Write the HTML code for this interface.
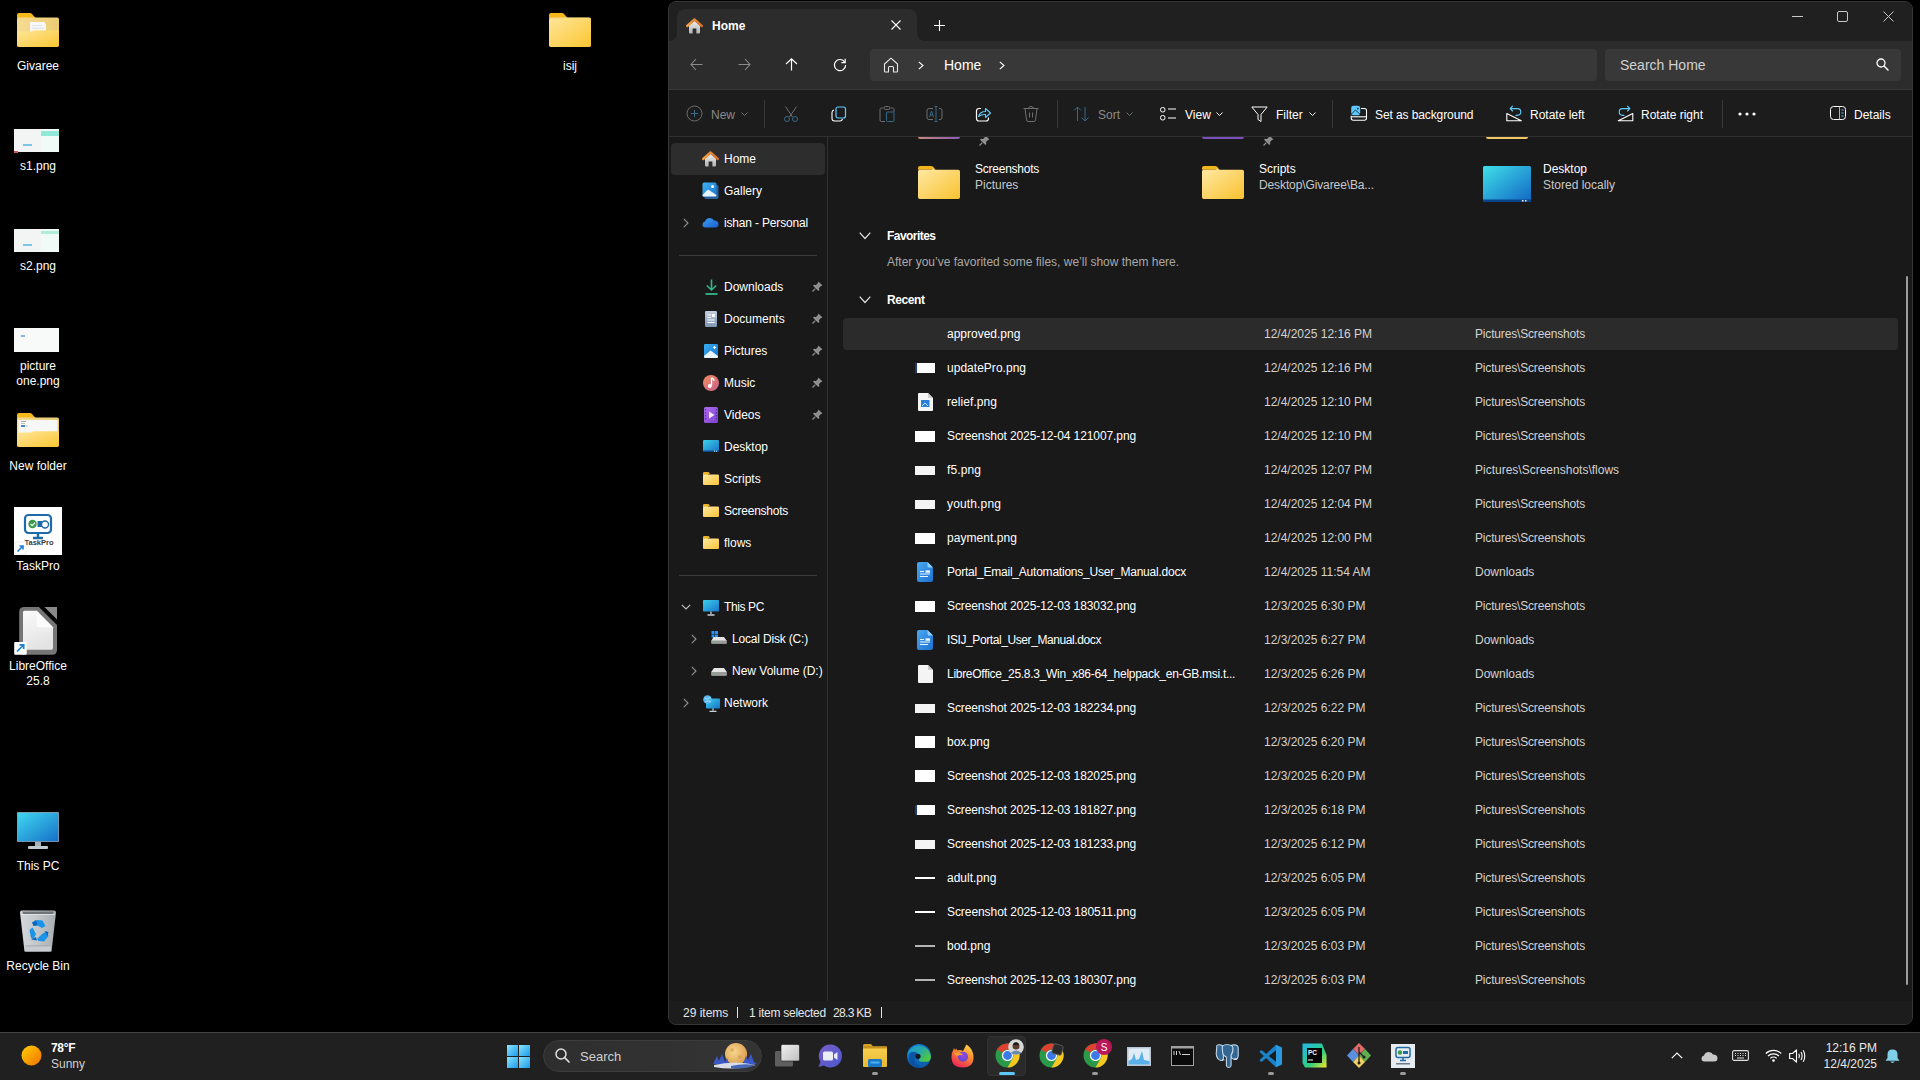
<!DOCTYPE html><html><head><meta charset="utf-8"><style>
html,body{margin:0;padding:0;width:1920px;height:1080px;overflow:hidden;background:#000;font-family:"Liberation Sans", sans-serif;}
.t{position:absolute;white-space:nowrap;}
svg{overflow:visible}
</style></head><body>
<div style="position:absolute;left:668px;top:1px;width:1245px;height:1024px;box-sizing:border-box;border:1px solid #363636;border-radius:8px;background:#191919;overflow:hidden">
<div style="position:absolute;left:0px;top:0px;width:1243px;height:39px;background:#202020;"></div>
<div style="position:absolute;left:0px;top:28px;width:1243px;height:59px;background:#2c2c2c;"></div>
<div style="position:absolute;left:0px;top:0px;width:8px;height:39px;background:#202020;border-bottom-right-radius:8px"></div>
<div style="position:absolute;left:248px;top:0px;width:995px;height:39px;background:#202020;border-bottom-left-radius:8px"></div>
<div style="position:absolute;left:8px;top:7px;width:240px;height:33px;background:#2c2c2c;border-top-left-radius:8px;border-top-right-radius:8px"></div>
<div style="position:absolute;left:0px;top:87px;width:1243px;height:1px;background:#383838;"></div>
<div style="position:absolute;left:0px;top:88px;width:1243px;height:46px;background:#1c1c1c;"></div>
<div style="position:absolute;left:0px;top:134px;width:1243px;height:1px;background:#303030;"></div>
<div style="position:absolute;left:0px;top:135px;width:158px;height:864px;background:#191919;"></div>
<div style="position:absolute;left:158px;top:135px;width:1px;height:864px;background:#303030;"></div>
<div style="position:absolute;left:159px;top:135px;width:1084px;height:864px;background:#191919;"></div>
<div style="position:absolute;left:0px;top:999px;width:1243px;height:23px;background:#1c1c1c;"></div>
</div>
<svg style="position:absolute;left:686px;top:18px;" width="17" height="16" viewBox="0 0 17 16"><defs><linearGradient id="thw" x1="0" y1="0" x2="0" y2="1"><stop offset="0" stop-color="#ececec"/><stop offset="1" stop-color="#b4b4b4"/></linearGradient>
<linearGradient id="thr" x1="0" y1="0" x2="1" y2="0"><stop offset="0" stop-color="#f3a13c"/><stop offset="1" stop-color="#d96f28"/></linearGradient></defs>
<path d="M3 7.5 L8.5 3 L14 7.5 L14 14.6 Q14 15.4 13.2 15.4 L10.4 15.4 L10.4 10.6 L6.6 10.6 L6.6 15.4 L3.8 15.4 Q3 15.4 3 14.6 Z" fill="url(#thw)"/>
<path d="M1.2 8 L8.5 1.4 L15.8 8" fill="none" stroke="url(#thr)" stroke-width="2.4" stroke-linecap="round" stroke-linejoin="round"/></svg>
<div class="t" style="left:712px;top:17.84px;font-size:12px;line-height:16px;color:#ffffff;font-weight:bold;">Home</div>
<svg style="position:absolute;left:891px;top:20px;" width="10" height="10" viewBox="0 0 10 10"><path d="M0.5 0.5 L9.5 9.5 M9.5 0.5 L0.5 9.5" stroke="#ffffff" stroke-width="1.1"/></svg>
<svg style="position:absolute;left:934px;top:20px;" width="11" height="11" viewBox="0 0 11 11"><path d="M5.5 0 V11 M0 5.5 H11" stroke="#ffffff" stroke-width="1.1"/></svg>
<svg style="position:absolute;left:1792px;top:16px;" width="12" height="2" viewBox="0 0 12 2"><path d="M0 0.5 H11" stroke="#c8c8c8" stroke-width="1"/></svg>
<svg style="position:absolute;left:1837px;top:11px;" width="12" height="12" viewBox="0 0 12 12"><rect x="0.5" y="0.5" width="10" height="10" rx="1.5" fill="none" stroke="#c8c8c8" stroke-width="1"/></svg>
<svg style="position:absolute;left:1883px;top:11px;" width="12" height="12" viewBox="0 0 12 12"><path d="M0.5 0.5 L10.5 10.5 M10.5 0.5 L0.5 10.5" stroke="#c8c8c8" stroke-width="1"/></svg>
<svg style="position:absolute;left:690px;top:58px;" width="13" height="13" viewBox="0 0 13 13"><path d="M6 1 L1 6.5 L6 12 M1 6.5 H12.5" fill="none" stroke="#8a8a8a" stroke-width="1.1"/></svg>
<svg style="position:absolute;left:738px;top:58px;" width="13" height="13" viewBox="0 0 13 13"><path d="M7 1 L12 6.5 L7 12 M12 6.5 H0.5" fill="none" stroke="#8a8a8a" stroke-width="1.1"/></svg>
<svg style="position:absolute;left:785px;top:58px;" width="13" height="13" viewBox="0 0 13 13"><path d="M1 6 L6.5 0.8 L12 6 M6.5 1 V12.5" fill="none" stroke="#ffffff" stroke-width="1.2"/></svg>
<svg style="position:absolute;left:833px;top:58px;" width="14" height="14" viewBox="0 0 14 14"><path d="M11.8 4.2 A5.6 5.6 0 1 0 12.6 7" fill="none" stroke="#ffffff" stroke-width="1.2"/><path d="M12.2 0.8 V4.6 H8.4" fill="none" stroke="#ffffff" stroke-width="1.2"/></svg>
<div style="position:absolute;left:870px;top:49px;width:727px;height:32px;background:#383838;border-radius:4px"></div>
<svg style="position:absolute;left:883px;top:57px;" width="16" height="16" viewBox="0 0 16 16"><path d="M1.5 7 L8 1.2 L14.5 7 V14.2 Q14.5 15 13.7 15 H10.5 V10.5 Q10.5 9.5 9.5 9.5 H6.5 Q5.5 9.5 5.5 10.5 V15 H2.3 Q1.5 15 1.5 14.2 Z" fill="none" stroke="#e8e8e8" stroke-width="1.1" stroke-linejoin="round"/></svg>
<svg style="position:absolute;left:918px;top:61px;" width="6" height="9" viewBox="0 0 6 9"><path d="M0.8 0.8 L5 4.5 L0.8 8.2" fill="none" stroke="#ffffff" stroke-width="1.1"/></svg>
<div class="t" style="left:944px;top:55.65px;font-size:14px;line-height:19px;color:#ffffff;font-weight:normal;">Home</div>
<svg style="position:absolute;left:999px;top:61px;" width="6" height="9" viewBox="0 0 6 9"><path d="M0.8 0.8 L5 4.5 L0.8 8.2" fill="none" stroke="#ffffff" stroke-width="1.1"/></svg>
<div style="position:absolute;left:1605px;top:49px;width:296px;height:32px;background:#383838;border-radius:4px"></div>
<div class="t" style="left:1620px;top:55.65px;font-size:14px;line-height:19px;color:#d0d0d0;font-weight:normal;">Search Home</div>
<svg style="position:absolute;left:1876px;top:58px;" width="13" height="13" viewBox="0 0 13 13"><circle cx="5" cy="5" r="4" fill="none" stroke="#ffffff" stroke-width="1.3"/><path d="M8 8 L12 12" stroke="#ffffff" stroke-width="1.5" stroke-linecap="round"/></svg>
<svg style="position:absolute;left:686px;top:105px;" width="17" height="17" viewBox="0 0 17 17"><circle cx="8.5" cy="8.5" r="7.5" fill="none" stroke="#6e6e6e" stroke-width="1"/><path d="M8.5 4.8 V12.2 M4.8 8.5 H12.2" stroke="#35698a" stroke-width="1"/></svg>
<div class="t" style="left:711px;top:106.84px;font-size:12px;line-height:16px;color:#8a8a8a;font-weight:normal;">New</div>
<svg style="position:absolute;left:741px;top:112px;" width="7" height="5" viewBox="0 0 7 5"><path d="M0.5 0.5 L3.5 3.5 L6.5 0.5" fill="none" stroke="#6e6e6e" stroke-width="1"/></svg>
<div style="position:absolute;left:764px;top:100px;width:1px;height:28px;background:#383838;"></div>
<svg style="position:absolute;left:783px;top:106px;" width="16" height="16" viewBox="0 0 16 16"><path d="M2.5 0.5 L9.5 11 M13.5 0.5 L6.5 11" stroke="#6e6e6e" stroke-width="1"/><circle cx="4" cy="13" r="2.5" fill="none" stroke="#35698a" stroke-width="1"/><circle cx="12" cy="13" r="2.5" fill="none" stroke="#35698a" stroke-width="1"/></svg>
<svg style="position:absolute;left:831px;top:106px;" width="16" height="16" viewBox="0 0 16 16"><path d="M3 4 Q1 4.5 1 6.5 V12.5 Q1 15 3.5 15 H9 Q11 15 11.5 13" fill="none" stroke="#ffffff" stroke-width="1.1"/><rect x="5" y="1" width="9.5" height="11" rx="2" fill="none" stroke="#60cdff" stroke-width="1.2"/></svg>
<svg style="position:absolute;left:879px;top:106px;" width="16" height="16" viewBox="0 0 16 16"><path d="M4 2 H2.5 Q1 2 1 3.5 V14 Q1 15.5 2.5 15.5 H6 M12 2 H13.5 Q15 2 15 3.5 V6" fill="none" stroke="#6e6e6e" stroke-width="1"/><rect x="5" y="0.5" width="6" height="3" rx="1.5" fill="none" stroke="#6e6e6e" stroke-width="1"/><rect x="7.5" y="6" width="7.5" height="9.5" rx="1" fill="none" stroke="#35698a" stroke-width="1"/></svg>
<svg style="position:absolute;left:926px;top:106px;" width="17" height="16" viewBox="0 0 17 16"><path d="M7 2.5 H3 Q1 2.5 1 4.5 V11.5 Q1 13.5 3 13.5 H7 M13 2.5 H14 Q16 2.5 16 4.5 V11.5 Q16 13.5 14 13.5 H13" fill="none" stroke="#6e6e6e" stroke-width="1"/><path d="M3.5 11 L5.5 5 L7.5 11 M4.2 9 H6.8" fill="none" stroke="#35698a" stroke-width="1"/><path d="M10 0.5 V15.5 M8.5 0.5 H11.5 M8.5 15.5 H11.5" fill="none" stroke="#35698a" stroke-width="1"/></svg>
<svg style="position:absolute;left:975px;top:106px;" width="17" height="16" viewBox="0 0 17 16"><path d="M6 2.5 H4 Q1.5 2.5 1.5 5 V12.5 Q1.5 15 4 15 H11 Q13.5 15 13.5 12.5 V11.5" fill="none" stroke="#ffffff" stroke-width="1.2"/><path d="M3.5 10.5 Q5 5.5 10.5 5.5 V2.5 L15.5 7 L10.5 11.5 V8.5 Q6.5 8.2 3.5 10.5 Z" fill="none" stroke="#60cdff" stroke-width="1.1" stroke-linejoin="round"/></svg>
<svg style="position:absolute;left:1023px;top:106px;" width="16" height="16" viewBox="0 0 16 16"><path d="M0.5 2.5 H15.5 M5.5 2.5 Q5.5 0.5 8 0.5 Q10.5 0.5 10.5 2.5 M2 2.5 L3.5 14 Q3.7 15.5 5 15.5 H11 Q12.3 15.5 12.5 14 L14 2.5 M6.5 6.5 V11.5 M9.5 6.5 V11.5" fill="none" stroke="#6e6e6e" stroke-width="1"/></svg>
<div style="position:absolute;left:1057px;top:100px;width:1px;height:28px;background:#383838;"></div>
<svg style="position:absolute;left:1073px;top:106px;" width="17" height="16" viewBox="0 0 17 16"><path d="M4.5 15 V1 M1 4.5 L4.5 1 L8 4.5" fill="none" stroke="#35698a" stroke-width="1"/><path d="M12 1 V15 M8.5 11.5 L12 15 L15.5 11.5" fill="none" stroke="#35698a" stroke-width="1"/></svg>
<div class="t" style="left:1098px;top:106.84px;font-size:12px;line-height:16px;color:#8a8a8a;font-weight:normal;">Sort</div>
<svg style="position:absolute;left:1126px;top:112px;" width="7" height="5" viewBox="0 0 7 5"><path d="M0.5 0.5 L3.5 3.5 L6.5 0.5" fill="none" stroke="#6e6e6e" stroke-width="1"/></svg>
<svg style="position:absolute;left:1160px;top:106px;" width="17" height="16" viewBox="0 0 17 16"><rect x="0.5" y="1.5" width="4.5" height="4.5" rx="2" fill="none" stroke="#ffffff" stroke-width="1"/><rect x="0.5" y="9.5" width="4.5" height="4.5" rx="2" fill="none" stroke="#ffffff" stroke-width="1"/><path d="M8 3 H16 M8 12 H16" stroke="#ffffff" stroke-width="1"/></svg>
<div class="t" style="left:1185px;top:106.84px;font-size:12px;line-height:16px;color:#ffffff;font-weight:normal;">View</div>
<svg style="position:absolute;left:1216px;top:112px;" width="7" height="5" viewBox="0 0 7 5"><path d="M0.5 0.5 L3.5 3.5 L6.5 0.5" fill="none" stroke="#ffffff" stroke-width="1"/></svg>
<svg style="position:absolute;left:1251px;top:106px;" width="17" height="16" viewBox="0 0 17 16"><path d="M0.8 1 H16.2 L10 8.5 V15.5 L7 13.5 V8.5 Z" fill="none" stroke="#ffffff" stroke-width="1" stroke-linejoin="round"/></svg>
<div class="t" style="left:1276px;top:106.84px;font-size:12px;line-height:16px;color:#ffffff;font-weight:normal;">Filter</div>
<svg style="position:absolute;left:1309px;top:112px;" width="7" height="5" viewBox="0 0 7 5"><path d="M0.5 0.5 L3.5 3.5 L6.5 0.5" fill="none" stroke="#ffffff" stroke-width="1"/></svg>
<div style="position:absolute;left:1332px;top:100px;width:1px;height:28px;background:#383838;"></div>
<svg style="position:absolute;left:1350px;top:105px;" width="18" height="17" viewBox="0 0 18 17"><rect x="1.2" y="0.8" width="9" height="9.5" rx="2.2" fill="#5cc8ff"/><path d="M1.5 9 L5.5 5 L9.8 9" fill="none" stroke="#0d2a40" stroke-width="0.9"/><circle cx="7.8" cy="3.6" r="0.9" fill="#0d2a40"/><path d="M11 3.5 H14.5 Q16.5 3.5 16.5 5.5 V13 Q16.5 15.2 14.3 15.2 H3.3 Q1.2 15.2 1.2 13 V10.8" fill="none" stroke="#ffffff" stroke-width="1.1"/><path d="M1.5 11.8 H16.2" stroke="#ffffff" stroke-width="1.1"/></svg>
<div class="t" style="left:1375px;top:106.84px;font-size:12px;line-height:16px;color:#ffffff;font-weight:normal;letter-spacing:-0.1px">Set as background</div>
<svg style="position:absolute;left:1506px;top:105px;" width="17" height="17" viewBox="0 0 17 17"><path d="M0.8 8.5 V15.8 H15.3 Z" fill="none" stroke="#ffffff" stroke-width="1.1" stroke-linejoin="round"/><path d="M6.5 1.2 L4.2 3.6 L6.5 6 M4.4 3.6 H11.5 Q14.8 3.6 14.8 7 Q14.8 10.2 11.2 10.4 H10" fill="none" stroke="#60cdff" stroke-width="1.1" stroke-linecap="round"/></svg>
<div class="t" style="left:1530px;top:106.84px;font-size:12px;line-height:16px;color:#ffffff;font-weight:normal;">Rotate left</div>
<svg style="position:absolute;left:1617px;top:105px;" width="17" height="17" viewBox="0 0 17 17"><path d="M15.8 8.5 V15.8 H1.3 Z" fill="none" stroke="#ffffff" stroke-width="1.1" stroke-linejoin="round"/><path d="M10.5 1.2 L12.8 3.6 L10.5 6 M12.6 3.6 H5.5 Q2.2 3.6 2.2 7 Q2.2 10.2 5.8 10.4 H7" fill="none" stroke="#60cdff" stroke-width="1.1" stroke-linecap="round"/></svg>
<div class="t" style="left:1641px;top:106.84px;font-size:12px;line-height:16px;color:#ffffff;font-weight:normal;">Rotate right</div>
<div style="position:absolute;left:1722px;top:100px;width:1px;height:28px;background:#383838;"></div>
<svg style="position:absolute;left:1738px;top:112px;" width="18" height="4" viewBox="0 0 18 4"><circle cx="2" cy="2" r="1.6" fill="#ffffff"/><circle cx="9" cy="2" r="1.6" fill="#ffffff"/><circle cx="16" cy="2" r="1.6" fill="#ffffff"/></svg>
<svg style="position:absolute;left:1830px;top:106px;" width="16" height="15" viewBox="0 0 16 15"><rect x="0.5" y="0.5" width="15" height="13" rx="3" fill="none" stroke="#ffffff" stroke-width="1"/><path d="M9.5 0.5 V13.5" stroke="#60cdff" stroke-width="1"/><path d="M11.5 4 H13.5 M11.5 7 H13.5 M11.5 10 H13.5" stroke="#60cdff" stroke-width="1"/></svg>
<div class="t" style="left:1854px;top:106.84px;font-size:12px;line-height:16px;color:#ffffff;font-weight:normal;">Details</div>
<div style="position:absolute;left:671px;top:143px;width:154px;height:32px;background:#2d2d2d;border-radius:4px"></div>
<svg style="position:absolute;left:702px;top:151px;" width="17" height="16" viewBox="0 0 17 16"><defs><linearGradient id="nhw" x1="0" y1="0" x2="0" y2="1"><stop offset="0" stop-color="#ececec"/><stop offset="1" stop-color="#b4b4b4"/></linearGradient>
<linearGradient id="nhr" x1="0" y1="0" x2="1" y2="0"><stop offset="0" stop-color="#f3a13c"/><stop offset="1" stop-color="#d96f28"/></linearGradient></defs>
<path d="M3 7.5 L8.5 3 L14 7.5 L14 14.6 Q14 15.4 13.2 15.4 L10.4 15.4 L10.4 10.6 L6.6 10.6 L6.6 15.4 L3.8 15.4 Q3 15.4 3 14.6 Z" fill="url(#nhw)"/>
<path d="M1.2 8 L8.5 1.4 L15.8 8" fill="none" stroke="url(#nhr)" stroke-width="2.4" stroke-linecap="round" stroke-linejoin="round"/></svg>
<div class="t" style="left:724px;top:150.84px;font-size:12px;line-height:16px;color:#ffffff;font-weight:normal;">Home</div>
<svg style="position:absolute;left:702px;top:182px;" width="17" height="17" viewBox="0 0 17 17"><defs><linearGradient id="gl" x1="0" y1="0" x2="1" y2="1"><stop offset="0" stop-color="#3fb7f5"/><stop offset="1" stop-color="#1a73c8"/></linearGradient></defs>
<rect x="2.5" y="3" width="14" height="14" rx="1.5" fill="#2a5f9e"/>
<rect x="0.5" y="0.5" width="14" height="14" rx="1.5" fill="url(#gl)"/>
<path d="M0.5 13 L6 7.5 L14.5 13 V13.5 Q14.5 14.5 13.5 14.5 H1.5 Q0.5 14.5 0.5 13.5 Z" fill="#e8f4ff"/>
<circle cx="10.5" cy="4.5" r="1.5" fill="#ffffff"/></svg>
<div class="t" style="left:724px;top:182.84px;font-size:12px;line-height:16px;color:#ffffff;font-weight:normal;">Gallery</div>
<svg style="position:absolute;left:683px;top:218px;" width="6" height="10" viewBox="0 0 6 10"><path d="M0.8 0.8 L5 5 L0.8 9.2" fill="none" stroke="#8c8c8c" stroke-width="1.2"/></svg>
<svg style="position:absolute;left:702px;top:217px;" width="17" height="11" viewBox="0 0 17 11"><defs><linearGradient id="od" x1="0" y1="0" x2="1" y2="1"><stop offset="0" stop-color="#3aa0f0"/><stop offset="1" stop-color="#1b5fd0"/></linearGradient></defs>
<path d="M3.5 10.5 Q0.5 10.5 0.5 7.5 Q0.5 5 3 4.6 Q4 1 7.8 1 Q10.8 1 12 3.6 Q16.5 3.6 16.5 7.2 Q16.5 10.5 13 10.5 Z" fill="url(#od)"/></svg>
<div class="t" style="left:724px;top:214.84px;font-size:12px;line-height:16px;color:#ffffff;font-weight:normal;;letter-spacing:-0.169px">ishan - Personal</div>
<div style="position:absolute;left:679px;top:255px;width:138px;height:1px;background:#3a3a3a;"></div>
<svg style="position:absolute;left:705px;top:279px;" width="13" height="16" viewBox="0 0 13 16"><path d="M6.5 0.5 V11 M1.8 6.5 L6.5 11 L11.2 6.5" fill="none" stroke="#33b88e" stroke-width="1.6"/><path d="M0.5 15 H12.5" stroke="#33b88e" stroke-width="1.8"/></svg>
<div class="t" style="left:724px;top:278.84px;font-size:12px;line-height:16px;color:#ffffff;font-weight:normal;">Downloads</div>
<svg style="position:absolute;left:812px;top:281px;" width="11" height="11" viewBox="0 0 11 11"><path d="M6.5 0.5 L10.5 4.5 L9 5 L7 7 L7.3 9 L6.3 10 L1 4.7 L2 3.7 L4 4 L6 2 Z" fill="#8f8f8f"/><path d="M3.3 7.7 L0.5 10.5" stroke="#8f8f8f" stroke-width="1.2"/></svg>
<svg style="position:absolute;left:705px;top:311px;" width="12" height="16" viewBox="0 0 12 16"><defs><linearGradient id="dc" x1="0" y1="0" x2="0" y2="1"><stop offset="0" stop-color="#c3cfdf"/><stop offset="1" stop-color="#7e95b4"/></linearGradient></defs>
<rect x="0" y="0" width="12" height="16" rx="1.2" fill="url(#dc)"/><path d="M2.5 4 H6 M2.5 6.5 H6 M2.5 9 H9.5 M2.5 11.5 H9.5" stroke="#fff" stroke-width="1.1"/><rect x="7" y="3" width="2.8" height="3" fill="#fff"/></svg>
<div class="t" style="left:724px;top:310.84px;font-size:12px;line-height:16px;color:#ffffff;font-weight:normal;">Documents</div>
<svg style="position:absolute;left:812px;top:313px;" width="11" height="11" viewBox="0 0 11 11"><path d="M6.5 0.5 L10.5 4.5 L9 5 L7 7 L7.3 9 L6.3 10 L1 4.7 L2 3.7 L4 4 L6 2 Z" fill="#8f8f8f"/><path d="M3.3 7.7 L0.5 10.5" stroke="#8f8f8f" stroke-width="1.2"/></svg>
<svg style="position:absolute;left:704px;top:344px;" width="14" height="14" viewBox="0 0 14 14"><defs><linearGradient id="pc" x1="0" y1="0" x2="1" y2="1"><stop offset="0" stop-color="#39b0f3"/><stop offset="1" stop-color="#1670cf"/></linearGradient></defs>
<rect x="0" y="0" width="14" height="14" rx="1.2" fill="url(#pc)"/><path d="M0 12 L6.5 6.5 L14 12 V12.8 Q14 14 12.8 14 H1.2 Q0 14 0 12.8 Z" fill="#eaf6ff"/><path d="M10.5 2 V5 M9 3.5 H12" stroke="#fff" stroke-width="1.2"/></svg>
<div class="t" style="left:724px;top:342.84px;font-size:12px;line-height:16px;color:#ffffff;font-weight:normal;">Pictures</div>
<svg style="position:absolute;left:812px;top:345px;" width="11" height="11" viewBox="0 0 11 11"><path d="M6.5 0.5 L10.5 4.5 L9 5 L7 7 L7.3 9 L6.3 10 L1 4.7 L2 3.7 L4 4 L6 2 Z" fill="#8f8f8f"/><path d="M3.3 7.7 L0.5 10.5" stroke="#8f8f8f" stroke-width="1.2"/></svg>
<svg style="position:absolute;left:703px;top:375px;" width="16" height="16" viewBox="0 0 16 16"><defs><linearGradient id="mu" x1="0" y1="0" x2="1" y2="1"><stop offset="0" stop-color="#f09060"/><stop offset="1" stop-color="#c85c8c"/></linearGradient></defs>
<circle cx="8" cy="8" r="8" fill="url(#mu)"/><path d="M8.5 3 V10.5" stroke="#fff" stroke-width="1.4"/><circle cx="6.8" cy="11" r="2" fill="#fff"/><path d="M8.5 3 Q11 3.5 11 6" fill="none" stroke="#fff" stroke-width="1.3"/></svg>
<div class="t" style="left:724px;top:374.84px;font-size:12px;line-height:16px;color:#ffffff;font-weight:normal;">Music</div>
<svg style="position:absolute;left:812px;top:377px;" width="11" height="11" viewBox="0 0 11 11"><path d="M6.5 0.5 L10.5 4.5 L9 5 L7 7 L7.3 9 L6.3 10 L1 4.7 L2 3.7 L4 4 L6 2 Z" fill="#8f8f8f"/><path d="M3.3 7.7 L0.5 10.5" stroke="#8f8f8f" stroke-width="1.2"/></svg>
<svg style="position:absolute;left:704px;top:407px;" width="14" height="16" viewBox="0 0 14 16"><defs><linearGradient id="vd" x1="0" y1="0" x2="1" y2="1"><stop offset="0" stop-color="#b070f0"/><stop offset="1" stop-color="#7a3fd0"/></linearGradient></defs>
<rect x="0" y="0" width="14" height="16" rx="1.5" fill="url(#vd)"/><path d="M5 4.5 L10.5 8 L5 11.5 Z" fill="#f3e8ff"/>
<path d="M1.5 2 V14 M12.5 2 V14" stroke="#5a2aa0" stroke-width="1.2" stroke-dasharray="1.5 1.5"/></svg>
<div class="t" style="left:724px;top:406.84px;font-size:12px;line-height:16px;color:#ffffff;font-weight:normal;">Videos</div>
<svg style="position:absolute;left:812px;top:409px;" width="11" height="11" viewBox="0 0 11 11"><path d="M6.5 0.5 L10.5 4.5 L9 5 L7 7 L7.3 9 L6.3 10 L1 4.7 L2 3.7 L4 4 L6 2 Z" fill="#8f8f8f"/><path d="M3.3 7.7 L0.5 10.5" stroke="#8f8f8f" stroke-width="1.2"/></svg>
<svg style="position:absolute;left:703px;top:440px;" width="16" height="12" viewBox="0 0 16 12"><defs><linearGradient id="dk" x1="0" y1="0" x2="1" y2="1"><stop offset="0" stop-color="#3ad4e8"/><stop offset="1" stop-color="#1a6fc8"/></linearGradient></defs>
<rect x="0" y="0" width="16" height="12" rx="1.2" fill="url(#dk)"/><rect x="0" y="10.5" width="16" height="1.5" fill="#0d4a8a"/><rect x="11" y="10.6" width="1" height="1" fill="#fff"/><rect x="13" y="10.6" width="1" height="1" fill="#fff"/></svg>
<div class="t" style="left:724px;top:438.84px;font-size:12px;line-height:16px;color:#ffffff;font-weight:normal;">Desktop</div>
<svg style="position:absolute;left:703px;top:472px;" width="16" height="13" viewBox="0 0 16 13"><defs><linearGradient id="nf1" x1="0" y1="0" x2="1" y2="1"><stop offset="0" stop-color="#ffe9a0"/><stop offset="1" stop-color="#f8c33a"/></linearGradient></defs>
<path d="M0 1.2 Q0 0 1.2 0 H5.5 L7.2 1.8 H6 L4.6 3 H0 Z" fill="#eeb126"/>
<rect x="0" y="2.4" width="16" height="10.6" rx="1.2" fill="url(#nf1)"/></svg>
<div class="t" style="left:724px;top:470.84px;font-size:12px;line-height:16px;color:#ffffff;font-weight:normal;">Scripts</div>
<svg style="position:absolute;left:703px;top:504px;" width="16" height="13" viewBox="0 0 16 13"><defs><linearGradient id="nf2" x1="0" y1="0" x2="1" y2="1"><stop offset="0" stop-color="#ffe9a0"/><stop offset="1" stop-color="#f8c33a"/></linearGradient></defs>
<path d="M0 1.2 Q0 0 1.2 0 H5.5 L7.2 1.8 H6 L4.6 3 H0 Z" fill="#eeb126"/>
<rect x="0" y="2.4" width="16" height="10.6" rx="1.2" fill="url(#nf2)"/></svg>
<div class="t" style="left:724px;top:502.84px;font-size:12px;line-height:16px;color:#ffffff;font-weight:normal;;letter-spacing:-0.244px">Screenshots</div>
<svg style="position:absolute;left:703px;top:536px;" width="16" height="13" viewBox="0 0 16 13"><defs><linearGradient id="nf3" x1="0" y1="0" x2="1" y2="1"><stop offset="0" stop-color="#ffe9a0"/><stop offset="1" stop-color="#f8c33a"/></linearGradient></defs>
<path d="M0 1.2 Q0 0 1.2 0 H5.5 L7.2 1.8 H6 L4.6 3 H0 Z" fill="#eeb126"/>
<rect x="0" y="2.4" width="16" height="10.6" rx="1.2" fill="url(#nf3)"/></svg>
<div class="t" style="left:724px;top:534.84px;font-size:12px;line-height:16px;color:#ffffff;font-weight:normal;">flows</div>
<div style="position:absolute;left:679px;top:575px;width:138px;height:1px;background:#3a3a3a;"></div>
<svg style="position:absolute;left:681px;top:604px;" width="10" height="6" viewBox="0 0 10 6"><path d="M0.8 0.8 L5 5 L9.2 0.8" fill="none" stroke="#c0c0c0" stroke-width="1.2"/></svg>
<svg style="position:absolute;left:703px;top:600px;" width="16" height="16" viewBox="0 0 16 16"><defs><linearGradient id="tpc" x1="0" y1="0" x2="1" y2="1"><stop offset="0" stop-color="#3ad0ec"/><stop offset="1" stop-color="#1874cc"/></linearGradient></defs>
<rect x="0" y="0" width="16" height="11.5" rx="0.8" fill="url(#tpc)"/><path d="M8 11.5 V14 M4.5 15 H11.5" stroke="#c8d0d8" stroke-width="1.3"/></svg>
<div class="t" style="left:724px;top:598.84px;font-size:12px;line-height:16px;color:#ffffff;font-weight:normal;;letter-spacing:-0.382px">This PC</div>
<svg style="position:absolute;left:691px;top:634px;" width="6" height="10" viewBox="0 0 6 10"><path d="M0.8 0.8 L5 5 L0.8 9.2" fill="none" stroke="#8c8c8c" stroke-width="1.2"/></svg>
<svg style="position:absolute;left:711px;top:631px;" width="16" height="13" viewBox="0 0 16 13"><rect x="0.5" y="0" width="3" height="3" fill="#2b8ff0"/><rect x="4" y="0" width="3" height="3" fill="#2b8ff0"/><rect x="0.5" y="3.5" width="3" height="3" fill="#2b8ff0"/><rect x="4" y="3.5" width="3" height="3" fill="#2b8ff0"/>
<path d="M2.5 6 H13 L15.5 9.5 V12.5 H0.5 V9.5 Z" fill="#e4e4e4"/><rect x="0.5" y="9.5" width="15" height="3" fill="#9a9a9a"/><rect x="2.5" y="10.5" width="1.2" height="1.2" fill="#38d060"/></svg>
<div class="t" style="left:732px;top:630.84px;font-size:12px;line-height:16px;color:#ffffff;font-weight:normal;;letter-spacing:-0.179px">Local Disk (C:)</div>
<svg style="position:absolute;left:691px;top:666px;" width="6" height="10" viewBox="0 0 6 10"><path d="M0.8 0.8 L5 5 L0.8 9.2" fill="none" stroke="#8c8c8c" stroke-width="1.2"/></svg>
<svg style="position:absolute;left:711px;top:668px;" width="16" height="8" viewBox="0 0 16 8"><path d="M3 0 H13 L15.5 3.5 V7.5 H0.5 V3.5 Z" fill="#e4e4e4"/><rect x="0.5" y="4" width="15" height="3.5" fill="#9a9a9a"/><rect x="2.5" y="5.2" width="1.2" height="1.2" fill="#38d060"/></svg>
<div class="t" style="left:732px;top:662.84px;font-size:12px;line-height:16px;color:#ffffff;font-weight:normal;">New Volume (D:)</div>
<svg style="position:absolute;left:683px;top:698px;" width="6" height="10" viewBox="0 0 6 10"><path d="M0.8 0.8 L5 5 L0.8 9.2" fill="none" stroke="#8c8c8c" stroke-width="1.2"/></svg>
<svg style="position:absolute;left:703px;top:695px;" width="17" height="17" viewBox="0 0 17 17"><defs><linearGradient id="nw" x1="0" y1="0" x2="1" y2="1"><stop offset="0" stop-color="#3ad0ec"/><stop offset="1" stop-color="#1874cc"/></linearGradient></defs>
<rect x="3" y="3.5" width="14" height="10" rx="0.8" fill="url(#nw)"/><path d="M10 13.5 V15.5 M6.5 16.3 H13.5" stroke="#c8d0d8" stroke-width="1.3"/>
<circle cx="4.5" cy="4.5" r="4.3" fill="#5ab8f0"/><path d="M1.5 3 Q4 5 7.5 2.5 M2 7 Q5 4.5 8 7" fill="none" stroke="#a8e0ff" stroke-width="0.9"/></svg>
<div class="t" style="left:724px;top:694.84px;font-size:12px;line-height:16px;color:#ffffff;font-weight:normal;">Network</div>
<div style="position:absolute;left:828px;top:137px;width:1078px;height:12px;overflow:hidden">
<div style="position:absolute;left:90px;top:-2px;width:42px;height:4px;background:linear-gradient(90deg,#c88a78,#8a5ab8);border-radius:0 0 2px 2px"></div>
<svg style="position:absolute;left:151px;top:-2px" width="11" height="11" viewBox="0 0 11 11"><path d="M6.5 0.5 L10.5 4.5 L9 5 L7 7 L7.3 9 L6.3 10 L1 4.7 L2 3.7 L4 4 L6 2 Z" fill="#8f8f8f"/><path d="M3.3 7.7 L0.5 10.5" stroke="#8f8f8f" stroke-width="1.2"/></svg>
<div style="position:absolute;left:374px;top:-2px;width:42px;height:4px;background:#7a50c0;border-radius:0 0 2px 2px"></div>
<svg style="position:absolute;left:435px;top:-2px" width="11" height="11" viewBox="0 0 11 11"><path d="M6.5 0.5 L10.5 4.5 L9 5 L7 7 L7.3 9 L6.3 10 L1 4.7 L2 3.7 L4 4 L6 2 Z" fill="#8f8f8f"/><path d="M3.3 7.7 L0.5 10.5" stroke="#8f8f8f" stroke-width="1.2"/></svg>
<div style="position:absolute;left:658px;top:-2px;width:42px;height:4px;background:#f2c660;border-radius:0 0 2px 2px"></div>
</div>
<svg style="position:absolute;left:918px;top:166px;" width="42" height="33" viewBox="0 0 42 33"><defs><linearGradient id="qf1" x1="0" y1="0" x2="1" y2="1"><stop offset="0" stop-color="#ffe9a6"/><stop offset="1" stop-color="#f9c22e"/></linearGradient></defs>
<path d="M0 2 Q0 0 2 0 H13 Q14.5 0 15.5 1.2 L17.5 3.8 H0 Z" fill="#f2b51c"/>
<path d="M0 5.5 Q0 3.8 1.8 3.8 H13.5 L15.5 2.5 L17 3.8 H40.2 Q42 3.8 42 5.6 V31.2 Q42 33 40.2 33 H1.8 Q0 33 0 31.2 Z" fill="url(#qf1)"/></svg>
<div class="t" style="left:975px;top:160.84px;font-size:12px;line-height:16px;color:#ffffff;font-weight:normal;;letter-spacing:-0.244px">Screenshots</div>
<div class="t" style="left:975px;top:176.84px;font-size:12px;line-height:16px;color:#c8c8c8;font-weight:normal;">Pictures</div>
<svg style="position:absolute;left:1202px;top:166px;" width="42" height="33" viewBox="0 0 42 33"><defs><linearGradient id="qf2" x1="0" y1="0" x2="1" y2="1"><stop offset="0" stop-color="#ffe9a6"/><stop offset="1" stop-color="#f9c22e"/></linearGradient></defs>
<path d="M0 2 Q0 0 2 0 H13 Q14.5 0 15.5 1.2 L17.5 3.8 H0 Z" fill="#f2b51c"/>
<path d="M0 5.5 Q0 3.8 1.8 3.8 H13.5 L15.5 2.5 L17 3.8 H40.2 Q42 3.8 42 5.6 V31.2 Q42 33 40.2 33 H1.8 Q0 33 0 31.2 Z" fill="url(#qf2)"/></svg>
<div class="t" style="left:1259px;top:160.84px;font-size:12px;line-height:16px;color:#ffffff;font-weight:normal;">Scripts</div>
<div class="t" style="left:1259px;top:176.84px;font-size:12px;line-height:16px;color:#c8c8c8;font-weight:normal;;letter-spacing:-0.112px">Desktop\Givaree\Ba...</div>
<svg style="position:absolute;left:1483px;top:166px;" width="48" height="37" viewBox="0 0 48 37"><defs><linearGradient id="qd" x1="0" y1="0" x2="1" y2="1"><stop offset="0" stop-color="#3fe0ea"/><stop offset="1" stop-color="#1266c4"/></linearGradient></defs>
<rect x="0" y="0" width="48" height="36" rx="1.5" fill="url(#qd)"/><rect x="0" y="33.5" width="48" height="2.5" fill="#0a4488"/><rect x="39" y="34" width="1.5" height="1.5" fill="#fff"/><rect x="42" y="34" width="1.5" height="1.5" fill="#fff"/></svg>
<div class="t" style="left:1543px;top:160.84px;font-size:12px;line-height:16px;color:#ffffff;font-weight:normal;">Desktop</div>
<div class="t" style="left:1543px;top:176.84px;font-size:12px;line-height:16px;color:#c8c8c8;font-weight:normal;">Stored locally</div>
<svg style="position:absolute;left:859px;top:232px;" width="12" height="8" viewBox="0 0 12 8"><path d="M0.7 0.7 L6 6.5 L11.3 0.7" fill="none" stroke="#e0e0e0" stroke-width="1.2"/></svg>
<div class="t" style="left:887px;top:227.84px;font-size:12px;line-height:16px;color:#ffffff;font-weight:bold;letter-spacing:-0.55px">Favorites</div>
<div class="t" style="left:887px;top:253.84px;font-size:12px;line-height:16px;color:#a8a8a8;font-weight:normal;">After you’ve favorited some files, we’ll show them here.</div>
<svg style="position:absolute;left:859px;top:296px;" width="12" height="8" viewBox="0 0 12 8"><path d="M0.7 0.7 L6 6.5 L11.3 0.7" fill="none" stroke="#e0e0e0" stroke-width="1.2"/></svg>
<div class="t" style="left:887px;top:291.84px;font-size:12px;line-height:16px;color:#ffffff;font-weight:bold;letter-spacing:-0.4px">Recent</div>
<div style="position:absolute;left:843px;top:318px;width:1055px;height:32px;background:#2b2b2b;border-radius:4px"></div>
<div class="t" style="left:947px;top:325.84px;font-size:12px;line-height:16px;color:#ffffff;font-weight:normal;">approved.png</div>
<div class="t" style="left:1264px;top:325.84px;font-size:12px;line-height:16px;color:#d2d2d2;font-weight:normal;">12/4/2025 12:16 PM</div>
<div class="t" style="left:1475px;top:325.84px;font-size:12px;line-height:16px;color:#d2d2d2;font-weight:normal;;letter-spacing:-0.168px">Pictures\Screenshots</div>
<div style="position:absolute;left:915px;top:363px;width:20px;height:10px;background:#ffffff;"></div>
<div style="position:absolute;left:915px;top:363px;width:2px;height:10px;background:#1b3a78;"></div>
<div class="t" style="left:947px;top:359.84px;font-size:12px;line-height:16px;color:#ffffff;font-weight:normal;;letter-spacing:0.023px">updatePro.png</div>
<div class="t" style="left:1264px;top:359.84px;font-size:12px;line-height:16px;color:#d2d2d2;font-weight:normal;">12/4/2025 12:16 PM</div>
<div class="t" style="left:1475px;top:359.84px;font-size:12px;line-height:16px;color:#d2d2d2;font-weight:normal;;letter-spacing:-0.168px">Pictures\Screenshots</div>
<svg style="position:absolute;left:918px;top:393px;" width="15" height="18" viewBox="0 0 15 18"><path d="M0 1 Q0 0 1 0 H10 L15 5 V17 Q15 18 14 18 H1 Q0 18 0 17 Z" fill="#f4f4f4"/><path d="M10 0 V5 H15" fill="#d0d0d0"/><rect x="3" y="7" width="8.5" height="7" fill="#2b7fd8"/><path d="M4 13 L7 10 L10 13" fill="none" stroke="#bfe0ff" stroke-width="1"/></svg>
<div class="t" style="left:947px;top:393.84px;font-size:12px;line-height:16px;color:#ffffff;font-weight:normal;;letter-spacing:0.064px">relief.png</div>
<div class="t" style="left:1264px;top:393.84px;font-size:12px;line-height:16px;color:#d2d2d2;font-weight:normal;">12/4/2025 12:10 PM</div>
<div class="t" style="left:1475px;top:393.84px;font-size:12px;line-height:16px;color:#d2d2d2;font-weight:normal;;letter-spacing:-0.168px">Pictures\Screenshots</div>
<div style="position:absolute;left:915px;top:431px;width:20px;height:11px;background:#ffffff;"></div>
<div class="t" style="left:947px;top:427.84px;font-size:12px;line-height:16px;color:#ffffff;font-weight:normal;;letter-spacing:-0.097px">Screenshot 2025-12-04 121007.png</div>
<div class="t" style="left:1264px;top:427.84px;font-size:12px;line-height:16px;color:#d2d2d2;font-weight:normal;">12/4/2025 12:10 PM</div>
<div class="t" style="left:1475px;top:427.84px;font-size:12px;line-height:16px;color:#d2d2d2;font-weight:normal;;letter-spacing:-0.168px">Pictures\Screenshots</div>
<div style="position:absolute;left:915px;top:466px;width:20px;height:9px;background:#f4f4f4;"></div>
<div class="t" style="left:947px;top:461.84px;font-size:12px;line-height:16px;color:#ffffff;font-weight:normal;;letter-spacing:0.109px">f5.png</div>
<div class="t" style="left:1264px;top:461.84px;font-size:12px;line-height:16px;color:#d2d2d2;font-weight:normal;">12/4/2025 12:07 PM</div>
<div class="t" style="left:1475px;top:461.84px;font-size:12px;line-height:16px;color:#d2d2d2;font-weight:normal;">Pictures\Screenshots\flows</div>
<div style="position:absolute;left:915px;top:500px;width:20px;height:9px;background:#f4f4f4;"></div>
<div class="t" style="left:947px;top:495.84px;font-size:12px;line-height:16px;color:#ffffff;font-weight:normal;;letter-spacing:0.146px">youth.png</div>
<div class="t" style="left:1264px;top:495.84px;font-size:12px;line-height:16px;color:#d2d2d2;font-weight:normal;">12/4/2025 12:04 PM</div>
<div class="t" style="left:1475px;top:495.84px;font-size:12px;line-height:16px;color:#d2d2d2;font-weight:normal;;letter-spacing:-0.168px">Pictures\Screenshots</div>
<div style="position:absolute;left:915px;top:533px;width:20px;height:11px;background:#ffffff;"></div>
<div class="t" style="left:947px;top:529.84px;font-size:12px;line-height:16px;color:#ffffff;font-weight:normal;;letter-spacing:0.058px">payment.png</div>
<div class="t" style="left:1264px;top:529.84px;font-size:12px;line-height:16px;color:#d2d2d2;font-weight:normal;">12/4/2025 12:00 PM</div>
<div class="t" style="left:1475px;top:529.84px;font-size:12px;line-height:16px;color:#d2d2d2;font-weight:normal;;letter-spacing:-0.168px">Pictures\Screenshots</div>
<svg style="position:absolute;left:917px;top:562px;" width="16" height="20" viewBox="0 0 16 20"><defs><linearGradient id="dx7" x1="0" y1="0" x2="1" y2="1"><stop offset="0" stop-color="#4aa8f0"/><stop offset="1" stop-color="#1e70d0"/></linearGradient></defs>
<path d="M0 2 Q0 0 2 0 H10.5 L16 5.5 V18 Q16 20 14 20 H2 Q0 20 0 18 Z" fill="url(#dx7)"/><path d="M10.5 0 V4 Q10.5 5.5 12 5.5 H16" fill="#8fd0ff"/>
<path d="M3 9.5 H7 M3 12 H13 M3 14.5 H11" stroke="#e8f4ff" stroke-width="1.1"/><rect x="8.5" y="8.3" width="4.5" height="2.5" fill="#e8f4ff"/></svg>
<div class="t" style="left:947px;top:563.84px;font-size:12px;line-height:16px;color:#ffffff;font-weight:normal;;letter-spacing:-0.222px">Portal_Email_Automations_User_Manual.docx</div>
<div class="t" style="left:1264px;top:563.84px;font-size:12px;line-height:16px;color:#d2d2d2;font-weight:normal;">12/4/2025 11:54 AM</div>
<div class="t" style="left:1475px;top:563.84px;font-size:12px;line-height:16px;color:#d2d2d2;font-weight:normal;">Downloads</div>
<div style="position:absolute;left:915px;top:601px;width:20px;height:11px;background:#ffffff;"></div>
<div class="t" style="left:947px;top:597.84px;font-size:12px;line-height:16px;color:#ffffff;font-weight:normal;;letter-spacing:-0.097px">Screenshot 2025-12-03 183032.png</div>
<div class="t" style="left:1264px;top:597.84px;font-size:12px;line-height:16px;color:#d2d2d2;font-weight:normal;">12/3/2025 6:30 PM</div>
<div class="t" style="left:1475px;top:597.84px;font-size:12px;line-height:16px;color:#d2d2d2;font-weight:normal;;letter-spacing:-0.168px">Pictures\Screenshots</div>
<svg style="position:absolute;left:917px;top:630px;" width="16" height="20" viewBox="0 0 16 20"><defs><linearGradient id="dx9" x1="0" y1="0" x2="1" y2="1"><stop offset="0" stop-color="#4aa8f0"/><stop offset="1" stop-color="#1e70d0"/></linearGradient></defs>
<path d="M0 2 Q0 0 2 0 H10.5 L16 5.5 V18 Q16 20 14 20 H2 Q0 20 0 18 Z" fill="url(#dx9)"/><path d="M10.5 0 V4 Q10.5 5.5 12 5.5 H16" fill="#8fd0ff"/>
<path d="M3 9.5 H7 M3 12 H13 M3 14.5 H11" stroke="#e8f4ff" stroke-width="1.1"/><rect x="8.5" y="8.3" width="4.5" height="2.5" fill="#e8f4ff"/></svg>
<div class="t" style="left:947px;top:631.84px;font-size:12px;line-height:16px;color:#ffffff;font-weight:normal;;letter-spacing:-0.407px">ISIJ_Portal_User_Manual.docx</div>
<div class="t" style="left:1264px;top:631.84px;font-size:12px;line-height:16px;color:#d2d2d2;font-weight:normal;">12/3/2025 6:27 PM</div>
<div class="t" style="left:1475px;top:631.84px;font-size:12px;line-height:16px;color:#d2d2d2;font-weight:normal;">Downloads</div>
<svg style="position:absolute;left:918px;top:665px;" width="15" height="18" viewBox="0 0 15 18"><path d="M0 1 Q0 0 1 0 H10 L15 5 V17 Q15 18 14 18 H1 Q0 18 0 17 Z" fill="#f4f4f4"/><path d="M10 0 V4 Q10 5 11 5 H15" fill="#c8c8c8"/></svg>
<div class="t" style="left:947px;top:665.84px;font-size:12px;line-height:16px;color:#ffffff;font-weight:normal;;letter-spacing:-0.287px">LibreOffice_25.8.3_Win_x86-64_helppack_en-GB.msi.t...</div>
<div class="t" style="left:1264px;top:665.84px;font-size:12px;line-height:16px;color:#d2d2d2;font-weight:normal;">12/3/2025 6:26 PM</div>
<div class="t" style="left:1475px;top:665.84px;font-size:12px;line-height:16px;color:#d2d2d2;font-weight:normal;">Downloads</div>
<div style="position:absolute;left:915px;top:704px;width:20px;height:9px;background:#f4f4f4;"></div>
<div class="t" style="left:947px;top:699.84px;font-size:12px;line-height:16px;color:#ffffff;font-weight:normal;;letter-spacing:-0.097px">Screenshot 2025-12-03 182234.png</div>
<div class="t" style="left:1264px;top:699.84px;font-size:12px;line-height:16px;color:#d2d2d2;font-weight:normal;">12/3/2025 6:22 PM</div>
<div class="t" style="left:1475px;top:699.84px;font-size:12px;line-height:16px;color:#d2d2d2;font-weight:normal;;letter-spacing:-0.168px">Pictures\Screenshots</div>
<div style="position:absolute;left:915px;top:736px;width:20px;height:12px;background:#ffffff;"></div>
<div class="t" style="left:947px;top:733.84px;font-size:12px;line-height:16px;color:#ffffff;font-weight:normal;">box.png</div>
<div class="t" style="left:1264px;top:733.84px;font-size:12px;line-height:16px;color:#d2d2d2;font-weight:normal;">12/3/2025 6:20 PM</div>
<div class="t" style="left:1475px;top:733.84px;font-size:12px;line-height:16px;color:#d2d2d2;font-weight:normal;;letter-spacing:-0.168px">Pictures\Screenshots</div>
<div style="position:absolute;left:915px;top:770px;width:20px;height:12px;background:#ffffff;"></div>
<div class="t" style="left:947px;top:767.84px;font-size:12px;line-height:16px;color:#ffffff;font-weight:normal;;letter-spacing:-0.097px">Screenshot 2025-12-03 182025.png</div>
<div class="t" style="left:1264px;top:767.84px;font-size:12px;line-height:16px;color:#d2d2d2;font-weight:normal;">12/3/2025 6:20 PM</div>
<div class="t" style="left:1475px;top:767.84px;font-size:12px;line-height:16px;color:#d2d2d2;font-weight:normal;;letter-spacing:-0.168px">Pictures\Screenshots</div>
<div style="position:absolute;left:915px;top:805px;width:20px;height:10px;background:#ffffff;"></div>
<div style="position:absolute;left:915px;top:805px;width:2px;height:10px;background:#1b3a78;"></div>
<div class="t" style="left:947px;top:801.84px;font-size:12px;line-height:16px;color:#ffffff;font-weight:normal;;letter-spacing:-0.097px">Screenshot 2025-12-03 181827.png</div>
<div class="t" style="left:1264px;top:801.84px;font-size:12px;line-height:16px;color:#d2d2d2;font-weight:normal;">12/3/2025 6:18 PM</div>
<div class="t" style="left:1475px;top:801.84px;font-size:12px;line-height:16px;color:#d2d2d2;font-weight:normal;;letter-spacing:-0.168px">Pictures\Screenshots</div>
<div style="position:absolute;left:915px;top:840px;width:20px;height:9px;background:#f4f4f4;"></div>
<div class="t" style="left:947px;top:835.84px;font-size:12px;line-height:16px;color:#ffffff;font-weight:normal;;letter-spacing:-0.097px">Screenshot 2025-12-03 181233.png</div>
<div class="t" style="left:1264px;top:835.84px;font-size:12px;line-height:16px;color:#d2d2d2;font-weight:normal;">12/3/2025 6:12 PM</div>
<div class="t" style="left:1475px;top:835.84px;font-size:12px;line-height:16px;color:#d2d2d2;font-weight:normal;;letter-spacing:-0.168px">Pictures\Screenshots</div>
<div style="position:absolute;left:915px;top:877px;width:20px;height:2px;background:#ffffff;"></div>
<div class="t" style="left:947px;top:869.84px;font-size:12px;line-height:16px;color:#ffffff;font-weight:normal;">adult.png</div>
<div class="t" style="left:1264px;top:869.84px;font-size:12px;line-height:16px;color:#d2d2d2;font-weight:normal;">12/3/2025 6:05 PM</div>
<div class="t" style="left:1475px;top:869.84px;font-size:12px;line-height:16px;color:#d2d2d2;font-weight:normal;;letter-spacing:-0.168px">Pictures\Screenshots</div>
<div style="position:absolute;left:915px;top:911px;width:20px;height:2px;background:#ffffff;"></div>
<div class="t" style="left:947px;top:903.84px;font-size:12px;line-height:16px;color:#ffffff;font-weight:normal;;letter-spacing:-0.069px">Screenshot 2025-12-03 180511.png</div>
<div class="t" style="left:1264px;top:903.84px;font-size:12px;line-height:16px;color:#d2d2d2;font-weight:normal;">12/3/2025 6:05 PM</div>
<div class="t" style="left:1475px;top:903.84px;font-size:12px;line-height:16px;color:#d2d2d2;font-weight:normal;;letter-spacing:-0.168px">Pictures\Screenshots</div>
<div style="position:absolute;left:915px;top:945px;width:20px;height:2px;background:#b4b4b4;"></div>
<div class="t" style="left:947px;top:937.84px;font-size:12px;line-height:16px;color:#ffffff;font-weight:normal;">bod.png</div>
<div class="t" style="left:1264px;top:937.84px;font-size:12px;line-height:16px;color:#d2d2d2;font-weight:normal;">12/3/2025 6:03 PM</div>
<div class="t" style="left:1475px;top:937.84px;font-size:12px;line-height:16px;color:#d2d2d2;font-weight:normal;;letter-spacing:-0.168px">Pictures\Screenshots</div>
<div style="position:absolute;left:915px;top:979px;width:20px;height:2px;background:#b4b4b4;"></div>
<div class="t" style="left:947px;top:971.84px;font-size:12px;line-height:16px;color:#ffffff;font-weight:normal;;letter-spacing:-0.097px">Screenshot 2025-12-03 180307.png</div>
<div class="t" style="left:1264px;top:971.84px;font-size:12px;line-height:16px;color:#d2d2d2;font-weight:normal;">12/3/2025 6:03 PM</div>
<div class="t" style="left:1475px;top:971.84px;font-size:12px;line-height:16px;color:#d2d2d2;font-weight:normal;;letter-spacing:-0.168px">Pictures\Screenshots</div>
<div style="position:absolute;left:1906px;top:276px;width:2px;height:709px;background:#9c9c9c;border-radius:1px"></div>
<div class="t" style="left:683px;top:1004.84px;font-size:12px;line-height:16px;color:#e6e6e6;font-weight:normal;">29 items</div>
<div style="position:absolute;left:737px;top:1007px;width:1px;height:11px;background:#e6e6e6;"></div>
<div class="t" style="left:749px;top:1004.84px;font-size:12px;line-height:16px;color:#e6e6e6;font-weight:normal;letter-spacing:-0.25px">1 item selected</div>
<div class="t" style="left:833px;top:1004.84px;font-size:12px;line-height:16px;color:#e6e6e6;font-weight:normal;;letter-spacing:-0.667px">28.3 KB</div>
<div style="position:absolute;left:881px;top:1007px;width:1px;height:11px;background:#e6e6e6;"></div>
<svg style="position:absolute;left:17px;top:13px;" width="42" height="34" viewBox="0 0 42 34"><defs><linearGradient id="dg1" x1="0" y1="0" x2="1" y2="1"><stop offset="0" stop-color="#fee69a"/><stop offset="1" stop-color="#fbc631"/></linearGradient>
<linearGradient id="dg1b" x1="0" y1="0" x2="1" y2="0"><stop offset="0" stop-color="#f6dc94"/><stop offset="1" stop-color="#eccb74"/></linearGradient></defs>
<path d="M0 2 Q0 0 2 0 H13 Q14.2 0 15 1 L19 5.5 H0 Z" fill="#f6b91c"/>
<rect x="0" y="4.6" width="42" height="29" rx="1.8" fill="url(#dg1b)"/><path d="M13 9 H27 L29 11 V20 H13 Z" fill="#f8f8f8"/><rect x="15" y="12" width="10" height="1" fill="#e0e4e8"/><rect x="15" y="14.5" width="12" height="1.5" fill="#e4e6e8"/><path d="M0 20.0 Q0 18.5 1.8 18.5 H14 L16.5 17.3 H40.2 Q42 17.3 42 19.1 V32.2 Q42 34 40.2 34 H1.8 Q0 34 0 32.2 Z" fill="url(#dg1)"/></svg>
<div class="t" style="left:-12px;width:100px;text-align:center;top:57.84px;font-size:12px;line-height:16px;color:#fff;text-shadow:0 0 2px #000,1px 1px 1px #000">Givaree</div>
<div style="position:absolute;left:14px;top:129px;width:45px;height:23px;background:#f3f5f5"></div>
<div style="position:absolute;left:41px;top:129px;width:18px;height:23px;background:#f0faf6"></div>
<div style="position:absolute;left:41px;top:131px;width:18px;height:5px;background:#8fe8d8"></div>
<div style="position:absolute;left:23px;top:144px;width:9px;height:2px;background:#7cc4e8"></div>
<div style="position:absolute;left:14px;top:151px;width:4px;height:2px;background:#e05050"></div>
<div class="t" style="left:-12px;width:100px;text-align:center;top:157.84px;font-size:12px;line-height:16px;color:#fff;text-shadow:0 0 2px #000,1px 1px 1px #000">s1.png</div>
<div style="position:absolute;left:14px;top:229px;width:45px;height:23px;background:#f3f5f5"></div>
<div style="position:absolute;left:41px;top:229px;width:18px;height:23px;background:#f0faf6"></div>
<div style="position:absolute;left:41px;top:231px;width:18px;height:3px;background:#b0ecd8"></div>
<div style="position:absolute;left:23px;top:244px;width:9px;height:2px;background:#7cc4e8"></div>
<div class="t" style="left:-12px;width:100px;text-align:center;top:257.84px;font-size:12px;line-height:16px;color:#fff;text-shadow:0 0 2px #000,1px 1px 1px #000">s2.png</div>
<div style="position:absolute;left:14px;top:328px;width:45px;height:24px;background:#f8f9f9"></div>
<div style="position:absolute;left:21px;top:335px;width:4px;height:2px;background:#88b8e0"></div>
<div class="t" style="left:-12px;width:100px;text-align:center;top:357.84px;font-size:12px;line-height:16px;color:#fff;text-shadow:0 0 2px #000,1px 1px 1px #000">picture</div>
<div class="t" style="left:-12px;width:100px;text-align:center;top:372.84px;font-size:12px;line-height:16px;color:#fff;text-shadow:0 0 2px #000,1px 1px 1px #000">one.png</div>
<svg style="position:absolute;left:17px;top:413px;" width="42" height="34" viewBox="0 0 42 34"><defs><linearGradient id="dg2" x1="0" y1="0" x2="1" y2="1"><stop offset="0" stop-color="#fee69a"/><stop offset="1" stop-color="#fbc631"/></linearGradient>
<linearGradient id="dg2b" x1="0" y1="0" x2="1" y2="0"><stop offset="0" stop-color="#f6dc94"/><stop offset="1" stop-color="#eccb74"/></linearGradient></defs>
<path d="M0 2 Q0 0 2 0 H13 Q14.2 0 15 1 L19 5.5 H0 Z" fill="#f6b91c"/>
<rect x="0" y="4.6" width="42" height="29" rx="1.8" fill="url(#dg2b)"/><rect x="1.5" y="7" width="39" height="13" fill="#f6f8f8"/><rect x="4" y="8" width="5" height="0.8" fill="#909090"/><rect x="4" y="10" width="4" height="0.8" fill="#b0b0b0"/><rect x="4" y="12" width="4" height="2" fill="#4a88b8"/><rect x="8.5" y="12.5" width="2" height="0.8" fill="#a0a0a0"/><path d="M0 21.0 Q0 19.5 1.8 19.5 H14 L16.5 18.3 H40.2 Q42 18.3 42 20.1 V32.2 Q42 34 40.2 34 H1.8 Q0 34 0 32.2 Z" fill="url(#dg2)"/></svg>
<div class="t" style="left:-12px;width:100px;text-align:center;top:457.84px;font-size:12px;line-height:16px;color:#fff;text-shadow:0 0 2px #000,1px 1px 1px #000">New folder</div>
<svg style="position:absolute;left:14px;top:507px;" width="48" height="48" viewBox="0 0 48 48"><rect x="0" y="0" width="48" height="48" fill="#ffffff"/>
<rect x="11" y="8" width="26" height="18" rx="3.5" fill="none" stroke="#1f6aa8" stroke-width="2.2"/><path d="M24 26 V30 M19 31 H29" stroke="#1f6aa8" stroke-width="2.4"/>
<circle cx="18.5" cy="17" r="4.2" fill="#3a9a4a"/><path d="M16.5 17 L18.2 18.7 L21 15.6" fill="none" stroke="#fff" stroke-width="1.1"/>
<rect x="23.5" y="14" width="5" height="6" fill="#1f6aa8"/><circle cx="31" cy="17.5" r="3.5" fill="#fff" stroke="#1f6aa8" stroke-width="1.4"/>
<text x="25" y="38" font-family="Liberation Sans" font-size="7.5" font-weight="bold" fill="#3a3a3a" text-anchor="middle">TaskPro</text>
<rect x="1" y="35" width="11" height="12" fill="#fff" stroke="#e0e0e0" stroke-width="0.5"/><path d="M3.5 44.5 L9 39 M5.5 39 H9 V42.5" fill="none" stroke="#1a80d8" stroke-width="1.6"/></svg>
<div class="t" style="left:-12px;width:100px;text-align:center;top:557.84px;font-size:12px;line-height:16px;color:#fff;text-shadow:0 0 2px #000,1px 1px 1px #000">TaskPro</div>
<svg style="position:absolute;left:14px;top:607px;" width="44" height="48" viewBox="0 0 44 48"><defs><linearGradient id="lop" x1="0" y1="0" x2="0.3" y2="1"><stop offset="0" stop-color="#fafafa"/><stop offset="1" stop-color="#e4e4e4"/></linearGradient></defs>
<path d="M10.2 0 H24.9 L43 18 V42.7 Q43 47.7 38 47.7 H10.2 Q5.2 47.7 5.2 42.7 V5 Q5.2 0 10.2 0 Z" fill="#767676"/>
<path d="M30.4 0 H43 V12.6 Z" fill="#8a8a8a"/>
<path d="M10.5 3.8 H22.7 L39 20.2 V41 Q39 42.7 37.3 42.7 H10.5 Q9 42.7 9 41 V5.3 Q9 3.8 10.5 3.8 Z" fill="url(#lop)"/>
<path d="M22.7 3.8 L39 20.2 H24.5 Q22.7 20.2 22.7 18.4 Z" fill="#fbfbfb"/>
<rect x="0.2" y="35" width="12.5" height="12.7" rx="1" fill="#ffffff"/><path d="M3 44.5 L9.5 38 M5.5 37.8 H9.7 V42" fill="none" stroke="#1a80d0" stroke-width="1.7"/></svg>
<div class="t" style="left:-12px;width:100px;text-align:center;top:657.84px;font-size:12px;line-height:16px;color:#fff;text-shadow:0 0 2px #000,1px 1px 1px #000">LibreOffice</div>
<div class="t" style="left:-12px;width:100px;text-align:center;top:672.84px;font-size:12px;line-height:16px;color:#fff;text-shadow:0 0 2px #000,1px 1px 1px #000">25.8</div>
<svg style="position:absolute;left:17px;top:812px;" width="42" height="38" viewBox="0 0 42 38"><defs><linearGradient id="dpc" x1="0" y1="0" x2="1" y2="1"><stop offset="0" stop-color="#40d8f0"/><stop offset="1" stop-color="#1670c8"/></linearGradient></defs>
<rect x="0" y="0" width="42" height="30" rx="1" fill="#8a9aa8"/><rect x="0.8" y="0.8" width="40.4" height="28.4" fill="url(#dpc)"/>
<rect x="18" y="30" width="6" height="4" fill="#a8b0b8"/><rect x="11" y="34" width="20" height="3" rx="1" fill="#c0c8d0"/></svg>
<div class="t" style="left:-12px;width:100px;text-align:center;top:857.84px;font-size:12px;line-height:16px;color:#fff;text-shadow:0 0 2px #000,1px 1px 1px #000">This PC</div>
<svg style="position:absolute;left:20px;top:910px;" width="36" height="42" viewBox="0 0 36 42"><defs><linearGradient id="rb" x1="0" y1="0" x2="1" y2="0"><stop offset="0" stop-color="#d4d8db"/><stop offset="0.45" stop-color="#c4c8cb"/><stop offset="1" stop-color="#a8adb1"/></linearGradient></defs>
<path d="M0 2.5 Q0 0.5 2 0.5 H34 Q36 0.5 36 2.5 L31.5 41.5 H4.5 Z" fill="url(#rb)"/>
<path d="M2.2 1.5 H33.8 L33 4 H3 Z" fill="#6e7478"/><path d="M1 4.2 H35 V5 H1 Z" fill="#e8eaec"/>
<path d="M5 36 H31 L30.6 41.5 H5.4 Z" fill="#c8ccd0"/><path d="M5 35.5 H31 V36.3 H5 Z" fill="#9aa0a4"/>
<g fill="#1a94e8"><path d="M13 13 L17 10 L22.5 10.5 L25.5 16 L22 18 Z"/><path d="M9.5 20 L12.5 17.5 L16 24 L13.5 29 L11 28 Z"/><path d="M17 29 L22 24 L26.5 21.5 L28.5 26 L24 31.5 L18.5 31 Z"/></g>
<g fill="#0a68c0"><path d="M12 12.5 L16 10 L17.5 15.5 L13.5 16 Z"/><path d="M11 29.5 L16 27 L17 30.5 Z"/><path d="M24.5 21 L28.5 22 L27.5 26 Z"/></g></svg>
<div class="t" style="left:-12px;width:100px;text-align:center;top:957.84px;font-size:12px;line-height:16px;color:#fff;text-shadow:0 0 2px #000,1px 1px 1px #000">Recycle Bin</div>
<svg style="position:absolute;left:549px;top:13px;" width="42" height="34" viewBox="0 0 42 34"><defs><linearGradient id="dg3" x1="0" y1="0" x2="1" y2="1"><stop offset="0" stop-color="#fee69a"/><stop offset="1" stop-color="#fbc631"/></linearGradient>
<linearGradient id="dg3b" x1="0" y1="0" x2="1" y2="0"><stop offset="0" stop-color="#f6dc94"/><stop offset="1" stop-color="#eccb74"/></linearGradient></defs>
<path d="M0 2 Q0 0 2 0 H13 Q14.2 0 15 1 L19 5.5 H0 Z" fill="#f6b91c"/>
<rect x="0" y="4.6" width="42" height="29" rx="1.8" fill="url(#dg3b)"/><path d="M0 7.5 Q0 6 1.8 6 H14 L16.5 4.8 H40.2 Q42 4.8 42 6.6 V32.2 Q42 34 40.2 34 H1.8 Q0 34 0 32.2 Z" fill="url(#dg3)"/></svg>
<div class="t" style="left:520px;width:100px;text-align:center;top:57.84px;font-size:12px;line-height:16px;color:#fff;text-shadow:0 0 2px #000,1px 1px 1px #000">isij</div>
<div style="position:absolute;left:0;top:1032px;width:1920px;height:48px;background:#202020;border-top:1px solid #424242;box-sizing:border-box"></div>
<svg style="position:absolute;left:21px;top:1045px;" width="21" height="21" viewBox="0 0 21 21"><defs><linearGradient id="sun" x1="0" y1="0" x2="1" y2="1"><stop offset="0" stop-color="#ffd000"/><stop offset="1" stop-color="#f07000"/></linearGradient></defs><circle cx="10.5" cy="10.5" r="10" fill="url(#sun)"/></svg>
<div class="t" style="left:51px;top:1039.84px;font-size:12px;line-height:16px;color:#ffffff;font-weight:bold;letter-spacing:-0.3px">78°F</div>
<div class="t" style="left:51px;top:1055.84px;font-size:12px;line-height:16px;color:#cfcfcf;font-weight:normal;">Sunny</div>
<svg style="position:absolute;left:507px;top:1045px;" width="23" height="23" viewBox="0 0 23 23"><defs><linearGradient id="st" x1="0" y1="0" x2="1" y2="1"><stop offset="0" stop-color="#8ae4ff"/><stop offset="1" stop-color="#1a9ae8"/></linearGradient></defs><rect x="0" y="0" width="11" height="11" fill="url(#st)"/><rect x="12" y="0" width="11" height="11" fill="url(#st)"/><rect x="0" y="12" width="11" height="11" fill="url(#st)"/><rect x="12" y="12" width="11" height="11" fill="url(#st)"/></svg>
<div style="position:absolute;left:543px;top:1040px;width:219px;height:32px;box-sizing:border-box;border-radius:16px;background:linear-gradient(90deg,#2e2e2e,#343434);border:1px solid #3c3c3c"></div>
<svg style="position:absolute;left:555px;top:1048px;" width="15" height="15" viewBox="0 0 15 15"><circle cx="6" cy="6" r="5" fill="none" stroke="#e0e0e0" stroke-width="1.5"/><path d="M9.7 9.7 L14 14" stroke="#e0e0e0" stroke-width="1.7" stroke-linecap="round"/></svg>
<div class="t" style="left:580px;top:1048.00px;font-size:13px;line-height:17px;color:#cfcfcf;font-weight:normal;">Search</div>
<svg style="position:absolute;left:713px;top:1042px;" width="44" height="28" viewBox="0 0 44 28"><defs><radialGradient id="mn" cx="0.4" cy="0.4" r="0.7"><stop offset="0" stop-color="#f8d890"/><stop offset="1" stop-color="#d89848"/></radialGradient></defs>
<circle cx="23" cy="12" r="11" fill="url(#mn)"/><circle cx="19" cy="8" r="2" fill="#e0b060"/><circle cx="27" cy="15" r="1.8" fill="#d8a050"/>
<path d="M0 22 L4 14 L6 19 L9 12 L12 20 L14 16 L16 22 Z M30 22 L33 14 L35 18 L38 12 L41 20 L44 22 Z" fill="#3a58c8"/>
<path d="M1 23 Q22 18 43 23 Q22 29 1 25 Z" fill="#d8dce8"/><path d="M18 24 Q30 21 43 23 Q30 28 18 26 Z" fill="#4a68b8"/></svg>
<svg style="position:absolute;left:775px;top:1044px;" width="25" height="23" viewBox="0 0 25 23"><defs><linearGradient id="tv" x1="0" y1="0" x2="1" y2="1"><stop offset="0" stop-color="#f0f0f0"/><stop offset="1" stop-color="#c0c0c0"/></linearGradient></defs><rect x="0" y="7" width="18" height="15.5" rx="1.5" fill="#5e5e5e"/><rect x="6" y="0.5" width="18.5" height="16.5" rx="1.5" fill="url(#tv)" stroke="#1c1c1c" stroke-width="0.6"/></svg>
<svg style="position:absolute;left:818px;top:1044px;" width="25" height="24" viewBox="0 0 25 24"><defs><linearGradient id="mt" x1="0" y1="0" x2="1" y2="1"><stop offset="0" stop-color="#7a5ec8"/><stop offset="1" stop-color="#4a58d0"/></linearGradient></defs><path d="M12.5 0.5 A11.5 11.5 0 1 1 6 21.5 L0.5 23 L2.5 18 A11.5 11.5 0 0 1 12.5 0.5 Z" fill="url(#mt)"/><rect x="5" y="7.5" width="10" height="9" rx="1.5" fill="#ececf4"/><path d="M16 10.5 L19.5 8 V16 L16 13.5 Z" fill="#ececf4"/></svg>
<svg style="position:absolute;left:863px;top:1044px;" width="24" height="23" viewBox="0 0 24 23"><defs><linearGradient id="fe" x1="0" y1="0" x2="0" y2="1"><stop offset="0" stop-color="#f8d050"/><stop offset="1" stop-color="#e8b830"/></linearGradient></defs><path d="M0 1.5 Q0 0 1.5 0 H8 L10 2.5 H0 Z" fill="#d8a020"/><rect x="0" y="2.5" width="24" height="20.5" rx="1" fill="url(#fe)"/><rect x="0" y="2.5" width="24" height="2" fill="#c89018"/><rect x="5" y="15" width="14" height="8" rx="1.5" fill="#1a78c8"/><rect x="7.5" y="17.5" width="9" height="2" fill="#4ab0f0"/></svg>
<div style="position:absolute;left:872px;top:1072px;width:6px;height:3px;border-radius:2px;background:#9a9a9a"></div>
<svg style="position:absolute;left:907px;top:1044px;" width="24" height="24" viewBox="0 0 24 24"><defs><linearGradient id="ed1" x1="0" y1="0" x2="1" y2="0.6"><stop offset="0" stop-color="#1a9ad8"/><stop offset="0.55" stop-color="#26a8a8"/><stop offset="1" stop-color="#50c840"/></linearGradient>
<linearGradient id="ed2" x1="0" y1="0" x2="0.3" y2="1"><stop offset="0" stop-color="#1480d8"/><stop offset="1" stop-color="#0c5eb0"/></linearGradient></defs>
<circle cx="12" cy="12" r="12" fill="url(#ed2)"/>
<path d="M0.2 11 A12 12 0 0 1 23.9 13 Q23.5 17.5 19.5 17.8 H14 Q11.5 17.5 12 15 Q13 12.5 11.5 10 Q8.5 6.5 4 8 Q1.5 9 0.2 11 Z" fill="url(#ed1)"/>
<path d="M4 8.5 Q8.5 7 11 10.5 Q7.5 10.5 7.5 15 Q7.5 20 13 22.5 Q17.5 24 21 19.5 Q19 23.5 12 24 Q4 23.5 2 16 Q1.5 10.5 4 8.5 Z" fill="#0a4c98" opacity="0.75"/>
<circle cx="11" cy="12.3" r="2.6" fill="#141a24"/></svg>
<svg style="position:absolute;left:951px;top:1044px;" width="23" height="24" viewBox="0 0 23 24"><defs><linearGradient id="ff" x1="0.8" y1="0" x2="0.3" y2="1"><stop offset="0" stop-color="#f8d848"/><stop offset="0.45" stop-color="#f88a30"/><stop offset="1" stop-color="#f0205a"/></linearGradient>
<radialGradient id="ffp" cx="0.5" cy="0.35" r="0.7"><stop offset="0" stop-color="#9a48e0"/><stop offset="1" stop-color="#5a48d0"/></radialGradient></defs>
<path d="M15.5 0.5 Q22.5 5 22.5 13.5 Q22.5 23.5 11.5 23.5 Q0.5 23.5 0.5 13 Q0.5 8 2.5 5.5 L3 4 L4 6 L5.5 4.5 L6 6.5 Q9 5.5 12 7 Q14 3 15.5 0.5 Z" fill="url(#ff)"/>
<circle cx="12" cy="12.8" r="5" fill="url(#ffp)"/>
<path d="M3 9.5 Q7 8 10.5 9.5 L12 11 Q8 10.5 6 12 Q4.5 11 3 9.5 Z" fill="#f8a030"/></svg>
<div style="position:absolute;left:987px;top:1036px;width:39px;height:40px;border-radius:4px;background:#2a2a2a;border:1px solid #333;box-sizing:border-box"></div>
<svg style="position:absolute;left:995px;top:1043px;" width="25" height="25" viewBox="0 0 25 25"><circle cx="12.5" cy="12.5" r="12" fill="#2b9a48"/>
<path d="M12.5 0.5 A12 12 0 0 1 22.9 6.5 H12.5 A6 6 0 0 0 7.3 9.5 L2.1 6.5 A12 12 0 0 1 12.5 0.5 Z" fill="#e0402f"/>
<path d="M22.9 6.5 A12 12 0 0 1 12.5 24.5 L17.7 15.5 A6 6 0 0 0 17.7 9.5 Z" fill="#f8c820"/>
<circle cx="12.5" cy="12.5" r="5.6" fill="#fff"/><circle cx="12.5" cy="12.5" r="4.4" fill="#3a7ae8"/></svg>
<svg style="position:absolute;left:1008px;top:1039px;" width="16" height="16" viewBox="0 0 16 16"><circle cx="8" cy="8" r="7.8" fill="#d8d8d8"/><circle cx="8" cy="7" r="3.5" fill="#5a3a2a"/><path d="M2.5 14 Q8 9 13.5 14 Q8 17 2.5 14 Z" fill="#6a8aa8"/><path d="M5.5 4.5 Q8 2 10.5 4.5 V6 H5.5 Z" fill="#1a1a1a"/></svg>
<div style="position:absolute;left:999px;top:1072px;width:16px;height:3px;border-radius:2px;background:#5cc8f8"></div>
<svg style="position:absolute;left:1039px;top:1043px;" width="25" height="25" viewBox="0 0 25 25"><circle cx="12.5" cy="12.5" r="12" fill="#2b9a48"/>
<path d="M12.5 0.5 A12 12 0 0 1 22.9 6.5 H12.5 A6 6 0 0 0 7.3 9.5 L2.1 6.5 A12 12 0 0 1 12.5 0.5 Z" fill="#e0402f"/>
<path d="M22.9 6.5 A12 12 0 0 1 12.5 24.5 L17.7 15.5 A6 6 0 0 0 17.7 9.5 Z" fill="#f8c820"/>
<circle cx="12.5" cy="12.5" r="5.6" fill="#fff"/><circle cx="12.5" cy="12.5" r="4.4" fill="#3a7ae8"/></svg>
<svg style="position:absolute;left:1052px;top:1044px;" width="11" height="11" viewBox="0 0 11 11"><rect x="0.5" y="0.5" width="10" height="10" rx="2" fill="#2a2a2a" stroke="#606060" stroke-width="0.8" transform="rotate(15 5.5 5.5)"/></svg>
<svg style="position:absolute;left:1083px;top:1043px;" width="25" height="25" viewBox="0 0 25 25"><circle cx="12.5" cy="12.5" r="12" fill="#2b9a48"/>
<path d="M12.5 0.5 A12 12 0 0 1 22.9 6.5 H12.5 A6 6 0 0 0 7.3 9.5 L2.1 6.5 A12 12 0 0 1 12.5 0.5 Z" fill="#e0402f"/>
<path d="M22.9 6.5 A12 12 0 0 1 12.5 24.5 L17.7 15.5 A6 6 0 0 0 17.7 9.5 Z" fill="#f8c820"/>
<circle cx="12.5" cy="12.5" r="5.6" fill="#fff"/><circle cx="12.5" cy="12.5" r="4.4" fill="#3a7ae8"/></svg>
<svg style="position:absolute;left:1096px;top:1039px;" width="16" height="16" viewBox="0 0 16 16"><circle cx="8" cy="8" r="8" fill="#b8185a"/><text x="8" y="12" font-family="Liberation Sans" font-size="10" fill="#fff" text-anchor="middle">S</text></svg>
<div style="position:absolute;left:1092px;top:1072px;width:6px;height:3px;border-radius:2px;background:#9a9a9a"></div>
<svg style="position:absolute;left:1127px;top:1047px;" width="24" height="19" viewBox="0 0 24 19"><rect x="0" y="0" width="24" height="19" fill="#b8c4d0"/><rect x="1.5" y="1.5" width="21" height="16" fill="#e0ecf8"/><path d="M1.5 14 L5 12 L7 6 L9 13 L12 12 L15 4 L17 13 L22.5 14 V17.5 H1.5 Z" fill="#5ab0e8"/></svg>
<svg style="position:absolute;left:1171px;top:1046px;" width="23" height="20" viewBox="0 0 23 20"><rect x="0" y="0" width="23" height="20" fill="#a0a0a0"/><rect x="1" y="2.5" width="21" height="16.5" fill="#0a0a0a"/><path d="M3 5 V9 M5.5 5 V9 M8 5 L9.5 9 M11 8.5 H19" stroke="#d0d0d0" stroke-width="1"/></svg>
<svg style="position:absolute;left:1215px;top:1044px;" width="24" height="24" viewBox="0 0 24 24"><g transform="scale(1.19,1)" fill="#336791" stroke="#c8dcf0" stroke-width="0.9">
<path d="M1.5 3 Q1 0.8 3.5 0.7 Q6.5 0.6 7 3 V14 Q7 17 5 16.5 Q1.5 15.5 1 10 Z"/>
<path d="M13 3 Q13 0.8 15.8 0.8 Q19.5 1 19.5 4 V12 Q19 16 16.5 15.5 Q13.5 15 13 11 Z"/>
<path d="M6 3 Q6.5 0.6 10 0.6 Q14.5 0.6 15 3.5 Q15.5 8 13.5 11 V21.5 Q13.3 23.5 11.5 23.5 Q9.8 23.5 9.6 21.5 L9.5 13 Q7 12 6.5 9 Z"/>
<path d="M6 15.5 L8 16 M15.5 15 L19 14.5" stroke="#c8dcf0" stroke-width="0.9"/></g></svg>
<svg style="position:absolute;left:1259px;top:1044px;" width="24" height="24" viewBox="0 0 24 24"><path d="M17 0.8 L23 3.6 V20.4 L17 23.2 Z" fill="#2a9ae0"/>
<path d="M17 0.8 L17 6.5 L7.5 13.8 L3.5 17.2 Q2 18.2 1 17 Q0.3 16 1.5 15 Z" fill="#1a82c8"/>
<path d="M17 23.2 L17 17.5 L7.5 10.2 L3.5 6.8 Q2 5.8 1 7 Q0.3 8 1.5 9 Z" fill="#1a82c8"/>
<path d="M17 6.5 L10.5 12 L17 17.5 Z" fill="#1c1c1c"/></svg>
<div style="position:absolute;left:1268px;top:1072px;width:6px;height:3px;border-radius:2px;background:#9a9a9a"></div>
<svg style="position:absolute;left:1302px;top:1043px;" width="25" height="25" viewBox="0 0 25 25"><defs><linearGradient id="py" x1="0" y1="0" x2="1" y2="1"><stop offset="0" stop-color="#20b8e8"/><stop offset="0.6" stop-color="#30d080"/><stop offset="1" stop-color="#f8e820"/></linearGradient></defs><path d="M0.5 0.5 H20 L24.5 12 V24.5 H3 L0.5 20 Z" fill="url(#py)"/><rect x="5" y="5" width="15" height="15" fill="#000"/><text x="6" y="12" font-family="Liberation Sans" font-size="6.5" font-weight="bold" fill="#fff">PC</text><rect x="6" y="16.5" width="5" height="1" fill="#fff"/></svg>
<svg style="position:absolute;left:1347px;top:1043px;" width="24" height="25" viewBox="0 0 24 25"><path d="M12 0 L18 6 L12 12 L6 6 Z" fill="#e06a6a"/><path d="M18 6 L24 12.5 L18 19 L12 12.5 Z" fill="#60b050"/><path d="M6 6 L12 12.5 L6 19 L0 12.5 Z" fill="#5a90e0"/><path d="M12 12.5 L18 19 L12 25 L6 19 Z" fill="#f0d060"/><path d="M12 4 V20 M12 9 L17 14" stroke="#222" stroke-width="1.3"/><circle cx="12" cy="20" r="1.5" fill="#222"/><circle cx="17" cy="14" r="1.5" fill="#222"/></svg>
<svg style="position:absolute;left:1391px;top:1044px;" width="24" height="24" viewBox="0 0 24 24"><rect x="0" y="0" width="24" height="24" fill="#e8ecf0"/><rect x="5" y="3.5" width="14" height="10" rx="2" fill="none" stroke="#1f6aa8" stroke-width="1.5"/><path d="M12 13.5 V16 M9 16.5 H15" stroke="#1f6aa8" stroke-width="1.4"/><circle cx="9" cy="8.5" r="2.2" fill="#3a9a4a"/><rect x="12" y="7" width="5" height="3" fill="#1f6aa8"/><rect x="5" y="19" width="14" height="1.5" fill="#6a7a8a"/></svg>
<div style="position:absolute;left:1400px;top:1072px;width:6px;height:3px;border-radius:2px;background:#9a9a9a"></div>
<svg style="position:absolute;left:1671px;top:1052px;" width="12" height="7" viewBox="0 0 12 7"><path d="M0.8 6.2 L6 1 L11.2 6.2" fill="none" stroke="#ffffff" stroke-width="1.2"/></svg>
<svg style="position:absolute;left:1701px;top:1051px;" width="17" height="11" viewBox="0 0 17 11"><path d="M3.5 10.5 Q0.5 10.5 0.5 7.5 Q0.5 5 3 4.6 Q4 1 7.8 1 Q10.8 1 12 3.6 Q16.5 3.6 16.5 7.2 Q16.5 10.5 13 10.5 Z" fill="#c8c8c8"/></svg>
<svg style="position:absolute;left:1732px;top:1050px;" width="17" height="11" viewBox="0 0 17 11"><rect x="0.6" y="0.6" width="15.8" height="9.8" rx="1.5" fill="none" stroke="#e0e0e0" stroke-width="1.1"/><path d="M3 3.5 H4 M5.5 3.5 H6.5 M8 3.5 H9 M10.5 3.5 H11.5 M13 3.5 H14 M3 5.5 H4 M5.5 5.5 H6.5 M8 5.5 H9 M10.5 5.5 H11.5 M13 5.5 H14 M5 8 H12" stroke="#e0e0e0" stroke-width="1"/></svg>
<svg style="position:absolute;left:1765px;top:1049px;" width="17" height="13" viewBox="0 0 17 13"><path d="M0.8 4.5 A11 11 0 0 1 16.2 4.5 M3 7 A8 8 0 0 1 14 7 M5.3 9.4 A4.6 4.6 0 0 1 11.7 9.4" fill="none" stroke="#ffffff" stroke-width="1.2"/><circle cx="8.5" cy="11.5" r="1.3" fill="#fff"/></svg>
<svg style="position:absolute;left:1789px;top:1049px;" width="17" height="14" viewBox="0 0 17 14"><path d="M0.6 4.5 H3.5 L7.5 0.8 V13.2 L3.5 9.5 H0.6 Z" fill="none" stroke="#ffffff" stroke-width="1.1" stroke-linejoin="round"/><path d="M9.8 4.8 Q11 7 9.8 9.2 M12 3 Q14.2 7 12 11 M14.2 1.2 Q17.4 7 14.2 12.8" fill="none" stroke="#ffffff" stroke-width="1.1"/></svg>
<div class="t" style="left:1800px;width:77px;text-align:right;top:1039.8px;font-size:12px;line-height:16px;color:#e8e8e8">12:16 PM</div>
<div class="t" style="left:1800px;width:77px;text-align:right;top:1055.8px;font-size:12px;line-height:16px;color:#e8e8e8">12/4/2025</div>
<svg style="position:absolute;left:1885px;top:1049px;" width="15" height="15" viewBox="0 0 15 15"><path d="M7.5 0.5 Q2.5 0.5 2.5 5.5 V9 L0.5 11.8 H14.5 L12.5 9 V5.5 Q12.5 0.5 7.5 0.5 Z" fill="#80d0e8"/><path d="M5.2 12.6 Q7.5 15.2 9.8 12.6 Z" fill="#80d0e8"/></svg>
</body></html>
